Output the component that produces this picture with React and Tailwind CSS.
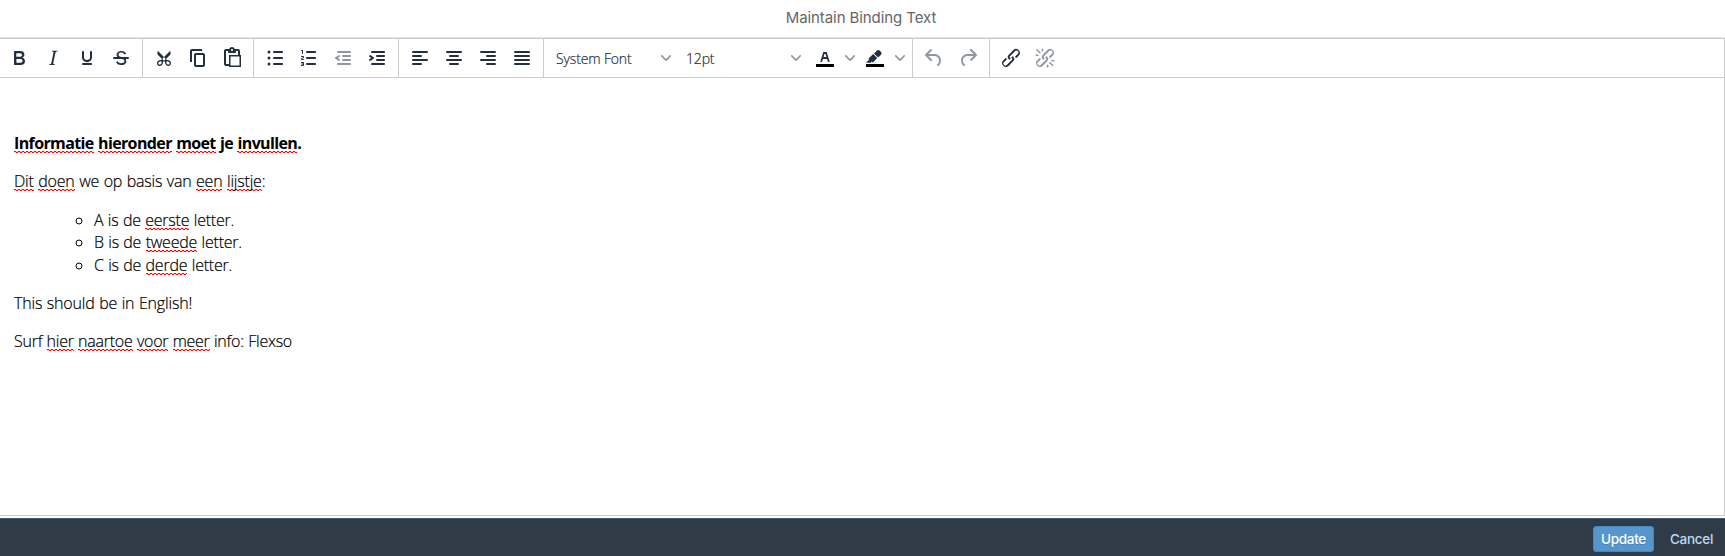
const P = {
  bold: 'M7.8 19c-.3 0-.5 0-.6-.2l-.2-.5V5.7c0-.2 0-.4.2-.5l.6-.2h5c1.5 0 2.7.3 3.5 1 .7.6 1.1 1.4 1.1 2.5a3 3 0 01-.6 1.9c-.4.6-1 1-1.6 1.2.4.1.9.3 1.3.6s.8.7 1 1.2c.4.4.5 1 .5 1.6 0 1.3-.4 2.3-1.3 3-.8.7-2.1 1-3.8 1H7.8zm5-8.3c.6 0 1.2-.1 1.6-.5.4-.3.6-.7.6-1.3 0-1.1-.8-1.7-2.3-1.7H9.3v3.5h3.4zm.5 6c.7 0 1.3-.1 1.7-.4.4-.4.6-.9.6-1.5s-.2-1-.7-1.4c-.4-.3-1-.4-2-.4H9.4v3.8h4z',
  italic: 'M16.7 4.7l-.1.9h-.3c-.6 0-1 0-1.4.3-.3.3-.4.6-.5 1.1l-2.1 9.8v.6c0 .5.4.8 1.4.8h.2l-.2.8H8l.2-.8h.2c1.1 0 1.8-.5 2-1.5l2-9.8.1-.5c0-.6-.4-.8-1.4-.8h-.3l.2-.9h5.8z',
  underline: 'M16 5c.6 0 1 .4 1 1v5.5a4 4 0 01-.4 1.8l-1 1.4a5.3 5.3 0 01-5.5 1 5 5 0 01-1.6-1c-.5-.4-.8-.9-1.1-1.4a4 4 0 01-.4-1.8V6c0-.6.4-1 1-1s1 .4 1 1v5.5c0 .3 0 .6.2 1l.6.7a3.3 3.3 0 002.2.8 3.4 3.4 0 002.2-.8c.3-.2.4-.5.6-.8l.2-.9V6c0-.6.4-1 1-1zM8 17h8c.6 0 1 .4 1 1s-.4 1-1 1H8a1 1 0 010-2z',
  strike: 'M15.6 8.5c-.5-.7-1-1.1-1.3-1.3-.6-.4-1.3-.6-2-.6-2.7 0-2.8 1.7-2.8 2.1 0 1.6 1.8 2 3.2 2.3 4.4.9 4.6 2.8 4.6 3.9 0 1.4-.7 4.1-5 4.1A6.2 6.2 0 017 16.4l1.5-1.1c.4.6 1.6 2 3.7 2 1.6 0 2.5-.4 3-1.2.4-.8.3-2-.8-2.6-.7-.4-1.6-.7-2.9-1-1-.2-3.9-.8-3.9-3.6C7.6 6 10.3 5 12.4 5c2.9 0 4.2 1.6 4.7 2.4l-1.5 1.1z|M5 11h14a1 1 0 010 2H5a1 1 0 010-2z',
  cut: 'M18 15c.6.7 1 1.4 1 2.3 0 .8-.2 1.5-.7 2l-.8.5-1 .2c-.4 0-.8 0-1.2-.3a3.9 3.9 0 01-2.1-2.2c-.2-.5-.3-1-.2-1.5l-1-1-1 1c0 .5 0 1-.2 1.5-.1.5-.4 1-.9 1.4-.3.4-.7.6-1.2.8l-1.2.3c-.4 0-.7 0-1-.2-.3 0-.6-.3-.8-.5-.5-.5-.8-1.2-.7-2 0-.9.4-1.6 1-2.2A3.7 3.7 0 018.6 14H9l1-1-4-4-.5-1a3.3 3.3 0 010-2c0-.4.3-.7.5-1l6 6 6-6 .5 1a3.3 3.3 0 010 2c0 .4-.3.7-.5 1l-4 4 1 1h.5c.4 0 .8 0 1.2.3.5.2.9.4 1.2.8zm-8.5 2.2l.1-.4v-.7a1 1 0 00-.2-.5 1 1 0 00-.4-.2 1.6 1.6 0 00-.8 0 2.6 2.6 0 00-.8.3 2.5 2.5 0 00-.9 1.1l-.1.4v.7l.2.5.5.2h.7a2.5 2.5 0 00.8-.3 2.8 2.8 0 001-1zm2.5-2.8c.4 0 .7-.1 1-.4.3-.3.4-.6.4-1s-.1-.7-.4-1c-.3-.3-.6-.4-1-.4s-.7.1-1 .4c-.3.3-.4.6-.4 1s.1.7.4 1c.3.3.6.4 1 .4zm5.4 4l.2-.5v-.7a2.6 2.6 0 00-.3-.8 2.4 2.4 0 00-.7-.7 2.5 2.5 0 00-.8-.3 1.5 1.5 0 00-.8 0 1 1 0 00-.4.2 1 1 0 00-.2.5 1.5 1.5 0 000 .7v.4l.3.4.3.4a2.8 2.8 0 00.8.5l.4.1h.7l.5-.2z',
  copy: 'M16 3H6a2 2 0 00-2 2v11h2V5h10V3zm1 4a2 2 0 012 2v10a2 2 0 01-2 2h-7a2 2 0 01-2-2V9c0-1.2.9-2 2-2h7zm0 12V9h-7v10h7z',
  paste: 'M18 9V5h-2v1c0 .6-.4 1-1 1H9a1 1 0 01-1-1V5H6v13h3V9h9zM9 20H6a2 2 0 01-2-2V5c0-1.1.9-2 2-2h3.2A3 3 0 0112 1a3 3 0 012.8 2H18a2 2 0 012 2v4h1v12H9v-1zm1.5-9.5v9h9v-9h-9zM12 3a1 1 0 00-1 1c0 .5.4 1 1 1s1-.5 1-1-.4-1-1-1z',
  bullets: 'M11 5h8c.6 0 1 .4 1 1s-.4 1-1 1h-8a1 1 0 010-2zm0 6h8c.6 0 1 .4 1 1s-.4 1-1 1h-8a1 1 0 010-2zm0 6h8c.6 0 1 .4 1 1s-.4 1-1 1h-8a1 1 0 010-2zM4.5 6a1.5 1.5 0 103 0 1.5 1.5 0 00-3 0zm0 6a1.5 1.5 0 103 0 1.5 1.5 0 00-3 0zm0 6a1.5 1.5 0 103 0 1.5 1.5 0 00-3 0z',
  numbers: 'M10 17h8c.6 0 1 .4 1 1s-.4 1-1 1h-8a1 1 0 010-2zm0-6h8c.6 0 1 .4 1 1s-.4 1-1 1h-8a1 1 0 010-2zm0-6h8c.6 0 1 .4 1 1s-.4 1-1 1h-8a1 1 0 110-2zM6 4v3.5c0 .3-.2.5-.5.5a.5.5 0 01-.5-.5V5h-.5a.5.5 0 010-1H6zm-1 8.8l.2.2h1.3c.3 0 .5.2.5.5s-.2.5-.5.5H4.9a1 1 0 01-.9-1V13c0-.4.3-.8.6-1l1.2-.4.2-.3a.2.2 0 00-.2-.2H4.5a.5.5 0 01-.5-.5c0-.3.2-.5.5-.5h1.6c.5 0 .9.4.9 1v.1c0 .4-.3.8-.6 1l-1.2.4-.2.3zM7 17v2c0 .6-.4 1-1 1H4.5a.5.5 0 010-1h1.2c.2 0 .3-.1.3-.3 0-.2-.1-.3-.3-.3H4.4a.4.4 0 110-.8h1.3c.2 0 .3-.1.3-.3 0-.2-.1-.3-.3-.3H4.5a.5.5 0 110-1H6c.6 0 1 .4 1 1z',
  outdent: 'M7 5h12c.6 0 1 .4 1 1s-.4 1-1 1H7a1 1 0 110-2zm5 4h7c.6 0 1 .4 1 1s-.4 1-1 1h-7a1 1 0 010-2zm0 4h7c.6 0 1 .4 1 1s-.4 1-1 1h-7a1 1 0 010-2zm-5 4h12a1 1 0 010 2H7a1 1 0 010-2zm1.6-3.8a1 1 0 01-1.2 1.6l-3-2a1 1 0 010-1.6l3-2a1 1 0 011.2 1.6L6.8 12l1.8 1.2z',
  indent: 'M7 5h12c.6 0 1 .4 1 1s-.4 1-1 1H7a1 1 0 110-2zm5 4h7c.6 0 1 .4 1 1s-.4 1-1 1h-7a1 1 0 010-2zm0 4h7c.6 0 1 .4 1 1s-.4 1-1 1h-7a1 1 0 010-2zm-5 4h12a1 1 0 010 2H7a1 1 0 010-2zm-2.6-3.8L6.2 12l-1.8-1.2a1 1 0 011.2-1.6l3 2a1 1 0 010 1.6l-3 2a1 1 0 11-1.2-1.6z',
  left: 'M5 5h14a1 1 0 010 2H5a1 1 0 110-2zm0 4h8a1 1 0 010 2H5a1 1 0 110-2zm0 8h8a1 1 0 010 2H5a1 1 0 010-2zm0-4h14a1 1 0 010 2H5a1 1 0 010-2z',
  center: 'M5 5h14a1 1 0 010 2H5a1 1 0 110-2zm3 4h8a1 1 0 010 2H8a1 1 0 110-2zm0 8h8a1 1 0 010 2H8a1 1 0 010-2zm-3-4h14a1 1 0 010 2H5a1 1 0 010-2z',
  right: 'M5 5h14a1 1 0 010 2H5a1 1 0 110-2zm6 4h8a1 1 0 010 2h-8a1 1 0 010-2zm0 8h8a1 1 0 010 2h-8a1 1 0 010-2zm-6-4h14a1 1 0 010 2H5a1 1 0 010-2z',
  justify: 'M5 5h14a1 1 0 010 2H5a1 1 0 110-2zm0 4h14a1 1 0 010 2H5a1 1 0 110-2zm0 4h14a1 1 0 010 2H5a1 1 0 010-2zm0 4h14a1 1 0 010 2H5a1 1 0 010-2z',
  color: 'M8.7 16h-.8a.5.5 0 01-.5-.6l2.7-9c.1-.3.3-.4.5-.4h2.8c.2 0 .4.1.5.4l2.7 9a.5.5 0 01-.5.6h-.8a.5.5 0 01-.4-.4l-.7-2.2c0-.3-.3-.4-.5-.4h-3.4c-.2 0-.4.1-.5.4l-.7 2.2c0 .3-.2.4-.4.4zm2.6-7.6l-.6 2a.5.5 0 00.5.6h1.6a.5.5 0 00.5-.6l-.6-2c0-.3-.3-.4-.5-.4h-.4c-.2 0-.4.1-.5.4z',
  highlight: 'M7.7 16.7H3l3.3-3.3-.7-.8L10.2 8l4 4.1-4 4.2c-.2.2-.6.2-.8 0l-.6-.7-1.1 1.1zm5-7.5L11 7.4l3-2.9a2 2 0 012.6 0L18 6c.7.7.7 2 0 2.7l-2.9 2.9-1.8-1.8-.5-.6z',
  undo: 'M6.4 8H12c3.7 0 6.2 2 6.8 5.1.6 2.7-.4 5.6-2.3 6.8a1 1 0 01-1-1.8c1.1-.6 1.8-2.7 1.4-4.6-.5-2.1-2.1-3.5-4.9-3.5H6.4l3.3 3.3a1 1 0 11-1.4 1.4l-5-5a1 1 0 010-1.4l5-5a1 1 0 011.4 1.4L6.4 8z',
  redo: 'M17.6 10H12c-2.8 0-4.4 1.4-4.9 3.5-.4 2 .3 4 1.4 4.6a1 1 0 11-1 1.8c-2-1.2-2.9-4.1-2.3-6.8.6-3 3-5.1 6.8-5.1h5.6l-3.3-3.3a1 1 0 111.4-1.4l5 5a1 1 0 010 1.4l-5 5a1 1 0 01-1.4-1.4l3.3-3.3z',
  link: 'M6.2 12.3a1 1 0 011.4 1.4l-2.1 2a2 2 0 102.7 2.8l4.8-4.8a1 1 0 000-1.4 1 1 0 111.4-1.3 2.9 2.9 0 010 4L9.6 20a3.9 3.9 0 01-5.5-5.5l2-2zm11.6-.6a1 1 0 01-1.4-1.4l2-2a2 2 0 10-2.6-2.8L11 10.3a1 1 0 000 1.4A1 1 0 119.6 13a2.9 2.9 0 010-4L14.4 4a3.9 3.9 0 015.5 5.5l-2 2z',
};
P.unlink = P.link + '|M7.6 6.3a.8.8 0 01-1 1.1L3.3 4.2a.7.7 0 111-1l3.2 3.1zM5.1 8.6a.8.8 0 010 1.5H3a.8.8 0 010-1.5H5zm5-3.5a.8.8 0 01-1.5 0V3a.8.8 0 011.5 0V5zm6 11.8a.8.8 0 011-1l3.2 3.2a.8.8 0 01-1 1L16 17zm-2.2 2a.8.8 0 011.5 0V21a.8.8 0 01-1.5 0V19zm5-3.5a.7.7 0 110-1.5H21a.8.8 0 010 1.5H19z';

function Tool({ name, off, bar }) {
  return (
    <button className={`flex h-[34px] w-[34px] items-center justify-center ${off ? 'text-[#222f3e]/50' : 'text-[#222f3e]'}`}>
      <svg width="24" height="24" viewBox="0 0 24 24" fill="currentColor" fillRule={name === 'bold' ? 'evenodd' : 'nonzero'}>
        {P[name].split('|').map((d) => <path key={d} d={d} />)}
        {bar && <path d="M3 18h18v3H3z" fill="#000" />}
      </svg>
    </button>
  );
}

function Chevron() {
  return (
    <svg className="shrink-0 text-[#222f3e]/50" width="10" height="10" viewBox="0 0 10 10" fill="currentColor">
      <path d="M8.7 2.2c.3-.3.8-.3 1 0 .4.4.4.9 0 1.2L5.7 7.8c-.3.3-.9.3-1.2 0L.2 3.4a.8.8 0 010-1.2c.3-.3.8-.3 1.1 0L5 6l3.7-3.8z" />
    </svg>
  );
}

function Group({ children, last }) {
  return <div className={`flex h-full shrink-0 items-center px-1 ${last ? '' : 'border-r border-[#cccccc]'}`}>{children}</div>;
}

function Select({ label }) {
  return (
    <button className="flex h-[34px] w-[130px] items-center justify-between pr-[7px] pl-2 text-[14px] text-[#222f3e]">
      <span className="font-light tracking-[-0.15px] [-webkit-text-stroke:0.2px_#222f3e]">{label}</span>
      <Chevron />
    </button>
  );
}

function Split({ name }) {
  return (
    <div className="flex items-center">
      <Tool name={name} bar />
      <span className="flex w-4 justify-center"><Chevron /></span>
    </div>
  );
}

// Misspelt word: two 1px dashed rows, offset by half a period, form the zigzag.
const S = ({ children }) => (
  <span className="bg-[linear-gradient(90deg,#ff0000_50%,#ff000030_50%),linear-gradient(90deg,#ff000030_50%,#ff0000_50%)] bg-[length:4px_1px,4px_1px] bg-[position:0_calc(100%_-_2px),0_calc(100%_-_1px)] bg-repeat-x">{children}</span>
);

export default function App() {
  return (
    <div className="flex h-[556px] w-full flex-col overflow-hidden bg-white font-['Open_Sans','Noto_Sans',sans-serif]">
      <header className="flex h-[38px] shrink-0 items-center justify-center border-b border-[#e5e5e5] pr-[3px] pb-px font-['Inter',sans-serif] text-[15px] tracking-[-0.08px] text-[#666666]">
        Maintain Binding Text
      </header>
      <main className="flex min-h-0 flex-1 flex-col border-y border-r border-[#cccccc]">
        <div className="flex h-[39px] shrink-0 border-b border-[#cccccc]">
          <div className="-ml-0.5 flex">
            <Group><Tool name="bold" /><Tool name="italic" /><Tool name="underline" /><Tool name="strike" /></Group>
            <Group><Tool name="cut" /><Tool name="copy" /><Tool name="paste" /></Group>
            <Group><Tool name="bullets" /><Tool name="numbers" /><Tool name="outdent" off /><Tool name="indent" /></Group>
            <Group><Tool name="left" /><Tool name="center" /><Tool name="right" /><Tool name="justify" /></Group>
            <Group><Select label="System Font" /><Select label="12pt" /><Split name="color" /><Split name="highlight" /></Group>
            <Group><Tool name="undo" off /><Tool name="redo" off /></Group>
            <Group last><Tool name="link" /><Tool name="unlink" off /></Group>
          </div>
        </div>
        <article className="px-3.5 pt-[54px] text-[16px] leading-[22.4px] font-light text-black">
          <p className="mb-4 font-bold tracking-[-0.62px] [word-spacing:0.8px]"><S>Informatie</S> <S>hieronder</S> <S>moet</S> je <S>invullen</S>.</p>
          <div className="[-webkit-text-stroke:0.2px_#000]">
            <p className="mb-4 tracking-[-0.2px] [word-spacing:0.6px]"><S>Dit</S> <S>doen</S> we op basis van <S>een</S> <S>lijstje</S>:</p>
            <ul className="mb-4 list-[circle] pl-20 tracking-[-0.22px] [word-spacing:0.5px]">
              <li>A is de <S>eerste</S> letter.</li>
              <li>B is de <S>tweede</S> letter.</li>
              <li>C is de <S>derde</S> letter.</li>
            </ul>
            <p className="mb-4 tracking-[-0.16px] [word-spacing:0.5px]">This should be in English!</p>
            <p className="tracking-[-0.25px] [word-spacing:0.5px]">Surf <S>hier</S> <S>naartoe</S> <S>voor</S> <S>meer</S> info: Flexso</p>
          </div>
        </article>
      </main>
      <footer className="mt-0.5 flex h-[38px] shrink-0 items-center justify-end border-t border-[#3f5b74] bg-[#2f3c48] pt-[3px] pr-3 font-['Inter',sans-serif] text-[13.5px] font-medium tracking-[-0.3px]">
        <button className="h-[26px] w-[61px] rounded-[3px] border border-[#4288c4] bg-[#5496cd] text-white text-shadow-2xs">Update</button>
        <button className="ml-4 text-[#bcd9f2]">Cancel</button>
      </footer>
    </div>
  );
}
